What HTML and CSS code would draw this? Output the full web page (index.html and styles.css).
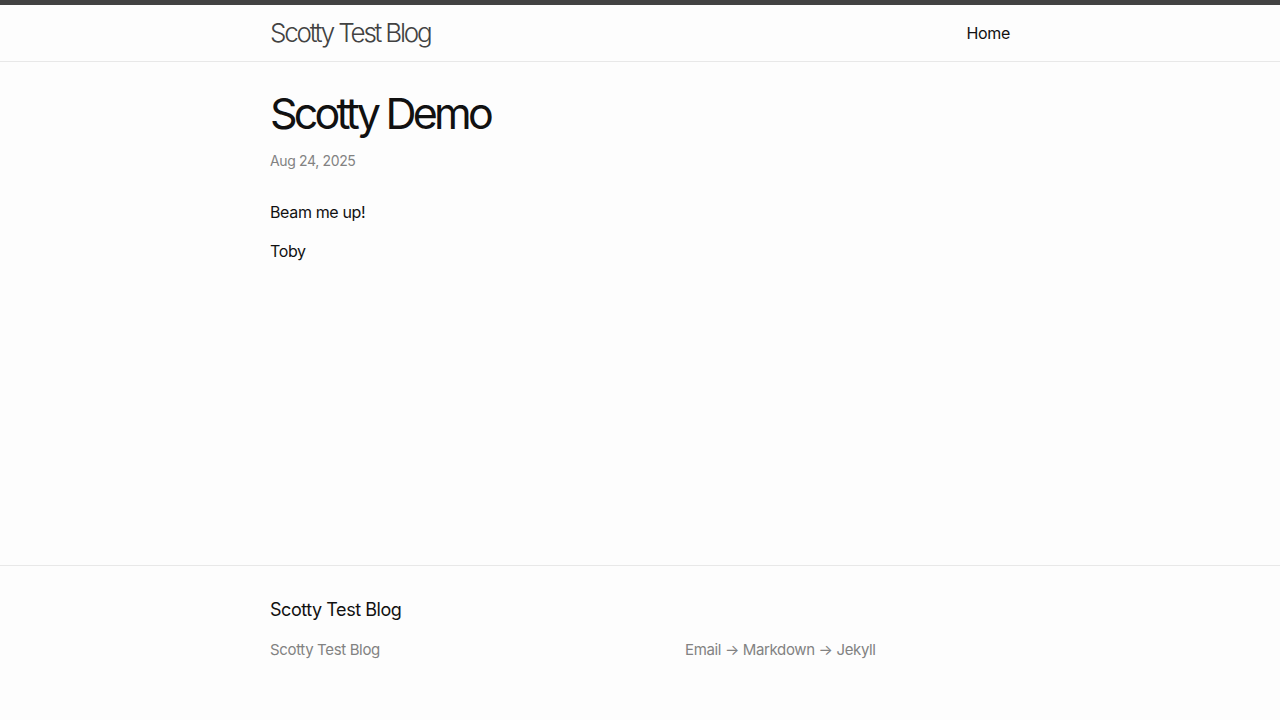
FILE: index.html
```html
<!DOCTYPE html>
<html lang="en">
<head>
<meta charset="utf-8">
<title>Scotty Demo | Scotty Test Blog</title>
<link rel="stylesheet" href="styles.css">
</head>
<body>
<header class="site-header">
  <div class="wrapper header-inner">
    <a class="site-title" href="#">Scotty Test Blog</a>
    <nav class="site-nav">
      <a class="page-link" href="#">Home</a>
    </nav>
  </div>
</header>
<main class="page-content">
  <div class="wrapper">
    <article class="post">
      <header class="post-header">
        <h1 class="post-title">Scotty Demo</h1>
        <p class="post-meta">Aug 24, 2025</p>
      </header>
      <div class="post-content">
        <p>Beam me up!</p>
        <p>Toby</p>
      </div>
    </article>
  </div>
</main>
<footer class="site-footer">
  <div class="wrapper">
    <h2 class="footer-heading">Scotty Test Blog</h2>
    <div class="footer-cols">
      <ul class="contact-list">
        <li>Scotty Test Blog</li>
      </ul>
      <p class="footer-desc">Email → Markdown → Jekyll</p>
    </div>
  </div>
</footer>
</body>
</html>
```
FILE: styles.css
```css
* { box-sizing: border-box; }
html, body { margin: 0; padding: 0; }
body {
  font: 400 16px/1.5 Inter, "Liberation Sans", sans-serif;
  letter-spacing: -0.022em;
  color: #111;
  background: #fdfdfd;
  min-height: 100vh;
  display: flex;
  flex-direction: column;
}
a { text-decoration: none; }
.wrapper {
  max-width: 800px;
  margin: 0 auto;
  padding: 0 30px;
  width: 100%;
}
.site-header {
  border-top: 5px solid #424242;
  border-bottom: 1px solid #e8e8e8;
  min-height: 56px;
}
.header-inner {
  display: flex;
  justify-content: space-between;
  align-items: center;
  height: 56px;
}
.site-title {
  font-size: 26px;
  font-weight: 300;
  letter-spacing: -2.2px;
  line-height: 54px;
  color: #424242;
}
.site-nav { line-height: 52px; }
.page-link { color: #111; }
.page-content {
  flex: 1;
  padding: 30px 0;
}
.post-header { margin-bottom: 29px; }
.post-title {
  margin: 0 0 15px;
  font-size: 43px;
  font-weight: 400;
  letter-spacing: -3.8px;
  line-height: 1;
}
.post-meta {
  margin: 0;
  font-size: 14px;
  color: #828282;
}
.post-content p { margin: 0 0 15px; }
.site-footer {
  border-top: 1px solid #e8e8e8;
  padding: 30px 0;
}
.footer-heading {
  margin: 0 0 16px;
  font-size: 18px;
  font-weight: 400;
  line-height: 1.5;
  letter-spacing: -0.025em;
}
.footer-cols {
  display: flex;
  font-size: 15px;
  line-height: 1.5;
  color: #828282;
  margin-bottom: 14px;
}
.contact-list {
  list-style: none;
  margin: 0 0 15px;
  padding: 0;
  width: 415px;
}
.footer-desc { margin: 0; }
```
